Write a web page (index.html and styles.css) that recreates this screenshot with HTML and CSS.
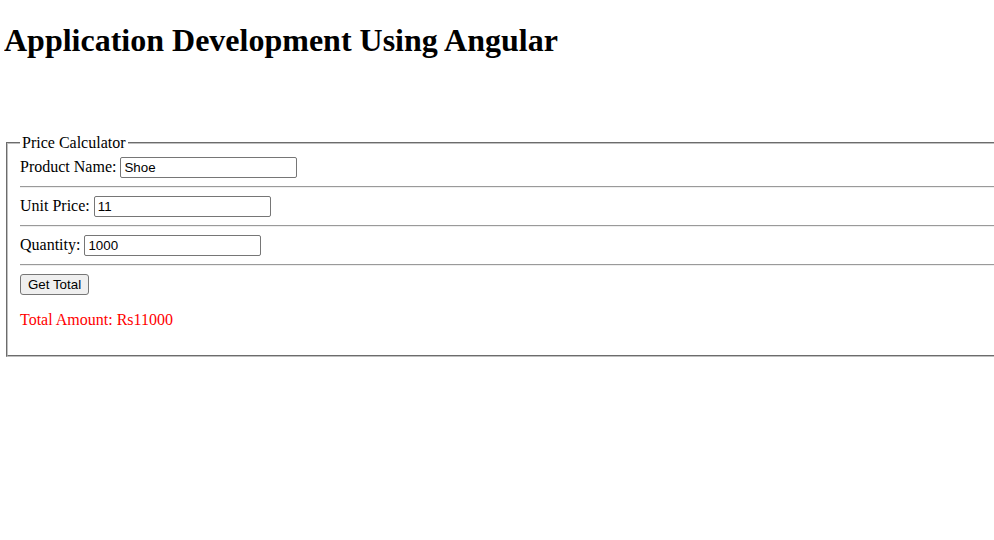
FILE: index.html
```html
<!DOCTYPE html>
<html>
<head>
<meta charset="utf-8">
<title>Price Calculator</title>
<link rel="stylesheet" href="styles.css">
</head>
<body class="page">
<h1 class="title">Application Development Using Angular</h1>
<fieldset class="calc">
  <legend class="calc-legend">Price Calculator</legend>
  <div class="row">Product Name: <input class="field" type="text" value="Shoe"></div>
  <hr class="sep">
  <div class="row">Unit Price: <input class="field" type="text" value="11"></div>
  <hr class="sep">
  <div class="row">Quantity: <input class="field" type="text" value="1000"></div>
  <hr class="sep">
  <div class="row"><button class="btn" type="button">Get Total</button></div>
  <p class="total">Total Amount: Rs11000</p>
</fieldset>
</body>
</html>
```
FILE: styles.css
```css
html {
  overflow: hidden;
}
.page {
  margin: 8px 0 8px 4px;
  font-family: "Liberation Serif", "Times New Roman", serif;
  font-size: 16px;
  color: #000;
  background: #fff;
}
.title {
  font-size: 32px;
  font-weight: bold;
  margin: 14.44px 0 21.44px;
}
.calc {
  width: 100%;
  margin: 74.44px 2px 0 2px;
  padding: 0.35em 0.75em 0.625em;
  border: 2px groove #c0c0c0;
}
.calc-legend {
  padding: 0 2px;
}
.row {
  line-height: normal;
}
.field {
  font-family: "Liberation Sans", Arial, sans-serif;
  font-size: 13.33px;
  padding: 2px 3px;
  border: 1px solid #767676;
  border-radius: 2px;
  width: 169px;
}
.sep {
  margin: 8px 0;
  border: 0;
  border-top: 1px solid #9a9a9a;
  border-bottom: 1px solid #eeeeee;
}
.btn {
  font-family: "Liberation Sans", Arial, sans-serif;
  font-size: 13.33px;
  padding: 2px 7px;
  border: 1px solid #767676;
  border-radius: 3px;
  background: #efefef;
  color: #000;
}
.total {
  color: #ff0000;
  margin: 16px 0;
}
```
